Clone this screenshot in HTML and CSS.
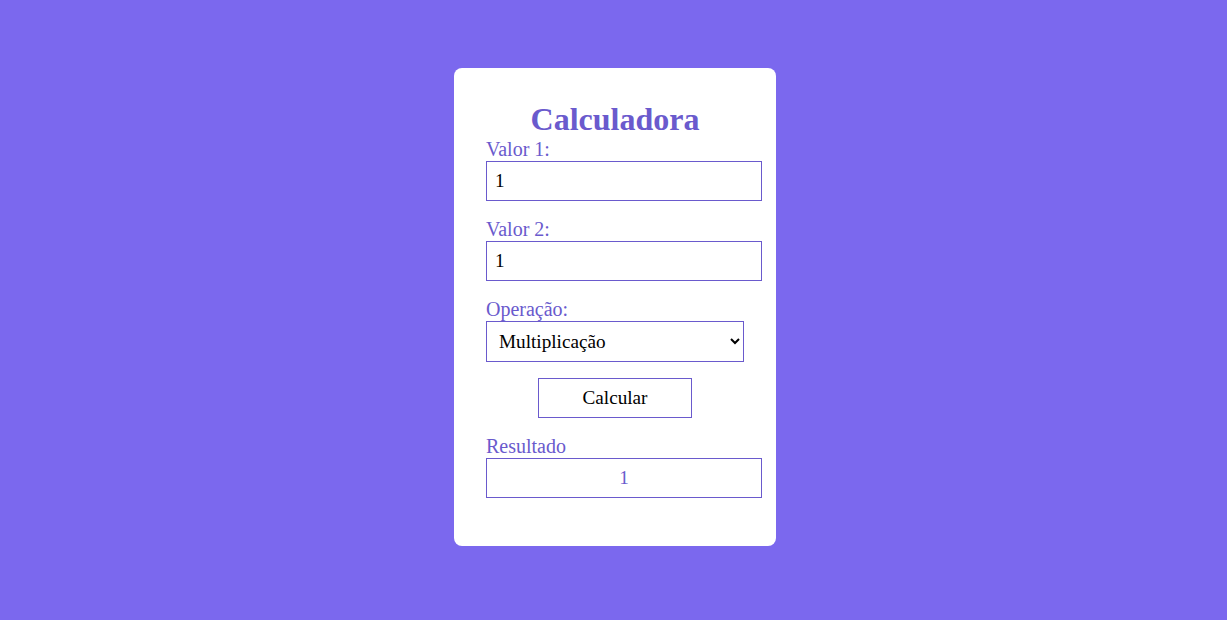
FILE: index.html
```html
<!DOCTYPE html>
<html lang="pt">
<head>
<meta charset="utf-8">
<title>Calculadora</title>
<link rel="stylesheet" href="styles.css">
</head>
<body>
  <main class="card">
    <h1 class="title">Calculadora</h1>
    <div class="field">
      <label class="label" for="v1">Valor 1:</label>
      <input class="input" id="v1" type="text" value="1">
    </div>
    <div class="field">
      <label class="label" for="v2">Valor 2:</label>
      <input class="input" id="v2" type="text" value="1">
    </div>
    <div class="field select-field">
      <label class="label" for="op">Operação:</label>
      <select class="select" id="op">
        <option>Soma</option>
        <option>Subtração</option>
        <option selected>Multiplicação</option>
        <option>Divisão</option>
      </select>
    </div>
    <div class="actions">
      <button class="button" type="button">Calcular</button>
    </div>
    <div class="field result-field">
      <div class="label">Resultado</div>
      <div class="result">1</div>
    </div>
  </main>
</body>
</html>
```

FILE: styles.css
```css
html, body {
  margin: 0;
  padding: 0;
}

body {
  background: #7b68ee;
  font-family: "Liberation Serif", "Times New Roman", serif;
  min-height: 620px;
  display: flex;
  justify-content: center;
  align-items: flex-start;
  padding: 68px 0 0 3px;
  box-sizing: border-box;
}

.card {
  background: #ffffff;
  border-radius: 8px;
  width: 258px;
  padding: 33px 32px 48px;
  color: #6a5acd;
}

.title {
  margin: 0;
  font-size: 32px;
  font-weight: bold;
  text-align: center;
  line-height: 37px;
  color: #6a5acd;
}

.field {
  margin-bottom: 17px;
}

.select-field {
  margin-bottom: 16px;
}

.result-field {
  margin-bottom: 0;
}

.label {
  display: block;
  font-size: 20px;
  line-height: 23px;
  color: #6a5acd;
}

.input {
  display: block;
  width: 100%;
  box-sizing: content-box;
  height: 22px;
  padding: 8px 8px;
  margin: 0;
  border: 1px solid #6a5acd;
  border-radius: 0;
  font-family: "Liberation Serif", "Times New Roman", serif;
  font-size: 19.2px;
  color: #000;
  background: #fff;
  outline: none;
}

.select {
  display: block;
  width: 100%;
  height: 41px;
  box-sizing: border-box;
  padding: 0 8px;
  margin: 0;
  border: 1px solid #6a5acd;
  border-radius: 0;
  font-family: "Liberation Serif", "Times New Roman", serif;
  font-size: 19.2px;
  color: #000;
  background: #fff;
}

.actions {
  display: flex;
  justify-content: center;
  margin-bottom: 17px;
}

.button {
  width: 154px;
  height: 40px;
  box-sizing: border-box;
  border: 1px solid #6a5acd;
  border-radius: 0;
  background: #fff;
  color: #000;
  font-family: "Liberation Serif", "Times New Roman", serif;
  font-size: 19.2px;
  padding: 0;
  cursor: pointer;
}

.result {
  width: 100%;
  box-sizing: content-box;
  padding: 0 8px;
  height: 38px;
  line-height: 38px;
  border: 1px solid #6a5acd;
  text-align: center;
  font-size: 19.2px;
  color: #6a5acd;
}
```
